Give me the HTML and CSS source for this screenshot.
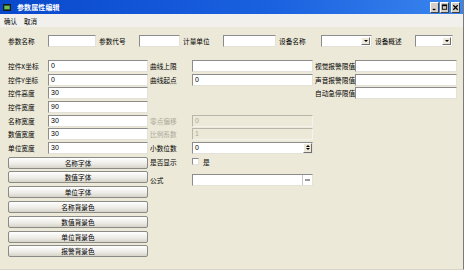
FILE: index.html
```html
<!DOCTYPE html>
<html>
<head>
    <title>参数属性编辑</title>
    <link rel="stylesheet" href="styles.css">
</head>
<body>
    <div class="window">
        <div class="titlebar">
            <svg class="app-icon" width="8" height="7" viewBox="0 0 8 7">
                <rect x="0.5" y="0.5" width="7" height="6" fill="#2d5a2d" stroke="#1a1a1a"/>
                <rect x="1.5" y="2" width="5" height="3" fill="#6fbf4f"/>
            </svg>
            <span class="title">参数属性编辑</span>
            <div class="win-buttons">
                <div class="win-btn"><svg width="8" height="9" viewBox="0 0 8 9"><rect x="2" y="6" width="3" height="1.5" fill="#000"/></svg></div>
                <div class="win-btn"><svg width="8" height="9" viewBox="0 0 8 9"><rect x="1.5" y="1.5" width="5" height="5" fill="none" stroke="#000"/><rect x="1.5" y="1.5" width="5" height="1.5" fill="#000"/></svg></div>
                <div class="win-btn close"><svg width="8" height="9" viewBox="0 0 8 9"><path d="M1.5 2 L6.5 7 M6.5 2 L1.5 7" stroke="#000" stroke-width="1.5"/></svg></div>
            </div>
        </div>
        <div class="menubar">
            <span>确认</span>
            <span>取消</span>
        </div>

        <div class="content">
            <!-- top line -->
            <div class="top-row">
                <label class="lbl w40">参数名称</label>
                <div class="field w48"></div>
                <label class="lbl w40 ml3">参数代号</label>
                <div class="field w41"></div>
                <label class="lbl w40 ml3">计量单位</label>
                <div class="field w53"></div>
                <label class="lbl w42 ml3">设备名称</label>
                <div class="field select w51"><span class="drop"><i></i></span></div>
                <label class="lbl w40 ml3">设备概述</label>
                <div class="field select w38"><span class="drop"><i></i></span></div>
            </div>

            <div class="columns">
                <!-- left column -->
                <div class="col">
                    <div class="form left">
                        <label class="lbl">控件X坐标</label><div class="field">0</div>
                        <label class="lbl">控件Y坐标</label><div class="field">0</div>
                        <label class="lbl">控件高度</label><div class="field">30</div>
                        <label class="lbl">控件宽度</label><div class="field">90</div>
                        <label class="lbl">名称宽度</label><div class="field">30</div>
                        <label class="lbl">数值宽度</label><div class="field">30</div>
                        <label class="lbl">单位宽度</label><div class="field">30</div>
                    </div>
                    <div class="buttons">
                        <button>名称字体</button>
                        <button>数值字体</button>
                        <button>单位字体</button>
                        <button>名称背景色</button>
                        <button>数值背景色</button>
                        <button>单位背景色</button>
                        <button>报警背景色</button>
                    </div>
                </div>

                <!-- middle column -->
                <div class="col">
                    <div class="form middle">
                        <label class="lbl">曲线上限</label><div class="field"></div>
                        <label class="lbl">曲线起点</label><div class="field">0</div>
                        <div class="spacer"></div>
                        <label class="lbl off">零点偏移</label><div class="field disabled">0</div>
                        <label class="lbl off">比例系数</label><div class="field disabled">1</div>
                        <label class="lbl">小数位数</label><div class="field spin">0<span class="spin-btn"><i class="up"></i><i class="down"></i></span></div>
                        <label class="lbl">是否显示</label>
                        <div class="check"><span class="box"></span><span>是</span></div>
                        <label class="lbl formula">公式</label><div class="field formula ellipsis"><span class="dots"><i></i></span></div>
                    </div>
                </div>

                <!-- right column -->
                <div class="col">
                    <div class="form right">
                        <label class="lbl">视觉报警限值</label><div class="field"></div>
                        <label class="lbl">声音报警限值</label><div class="field"></div>
                        <label class="lbl">自动急停限值</label><div class="field"></div>
                    </div>
                </div>
            </div>
        </div>
    </div>
</body>
</html>
```

FILE: styles.css
```css
body {
    margin: 0;
    background-color: #ffffff;
    font-family: "Noto Sans CJK SC", "Liberation Sans", sans-serif;
    font-size: 6.7px;
    color: #000;
}

.window {
    width: 463px;
    height: 269px;
    background-color: #ece9d8;
    border-right: 1px solid #7a7a7a;
    border-bottom: 1px solid #d8d5c6;
    display: flex;
    flex-direction: column;
    overflow: hidden;
}

.titlebar {
    height: 14px;
    background: linear-gradient(to right, #0a48cc, #1a62e0 60%, #3a86ee);
    display: flex;
    align-items: center;
    padding-left: 3px;
}

.app-icon {
    display: block;
}

.title {
    color: #fff;
    font-weight: bold;
    font-size: 7px;
    margin-left: 6px;
    letter-spacing: 0.1px;
}

.win-buttons {
    margin-left: auto;
    margin-right: 3px;
    display: flex;
    gap: 1px;
}

.win-btn {
    width: 7px;
    height: 9px;
    background-color: #d4d0c8;
    border: 1px solid;
    border-color: #fff #404040 #404040 #fff;
    display: flex;
    align-items: center;
    justify-content: center;
}

.win-btn svg {
    display: block;
}

.win-btn.close {
    margin-left: 1px;
}

.menubar {
    height: 13px;
    background-color: #f1f0ec;
    display: flex;
    align-items: center;
    gap: 7px;
    padding-left: 4px;
    font-size: 6.5px;
}

.content {
    flex: 1;
    padding: 8px 0 0 8px;
}

.top-row {
    display: flex;
    align-items: center;
    height: 12px;
}

.lbl {
    white-space: nowrap;
    line-height: 12px;
}

.lbl.off {
    color: #aca899;
}

.w38 { width: 38px; }
.w40 { width: 40px; }
.w41 { width: 41px; }
.w42 { width: 42px; }
.w48 { width: 48px; }
.w51 { width: 51px; }
.w53 { width: 53px; }
.ml3 { margin-left: 3px; }

.field {
    box-sizing: border-box;
    height: 12px;
    background-color: #fff;
    border: 1px solid;
    border-color: #8c8c8c #e4e2d8 #e4e2d8 #8c8c8c;
    padding-left: 2px;
    font-family: "Liberation Sans", sans-serif;
    font-size: 7px;
    line-height: 10px;
    position: relative;
}

.field.disabled {
    background-color: #ece9d8;
    color: #aca899;
    border-color: #b8b6aa #f4f3ee #f4f3ee #b8b6aa;
}

.select .drop,
.spin .spin-btn,
.ellipsis .dots {
    position: absolute;
    top: 0;
    right: 0;
    bottom: 0;
    width: 9px;
    background-color: #ece9d8;
    border-left: 1px solid #d0cdbf;
    display: flex;
    align-items: center;
    justify-content: center;
}

.select .drop {
    border: 1px solid;
    border-color: #fff #6e6e6e #6e6e6e #fff;
    box-sizing: border-box;
    top: 1px;
    bottom: 1px;
    right: 1px;
}

.select .drop i {
    border-left: 2px solid transparent;
    border-right: 2px solid transparent;
    border-top: 2px solid #000;
}

.spin .spin-btn {
    flex-direction: column;
    gap: 1px;
    border: 1px solid;
    border-color: #fff #6e6e6e #6e6e6e #fff;
    box-sizing: border-box;
}

.spin .spin-btn i {
    border-left: 2px solid transparent;
    border-right: 2px solid transparent;
}

.spin .spin-btn .up {
    border-bottom: 2px solid #000;
}

.spin .spin-btn .down {
    border-top: 2px solid #000;
}

.ellipsis .dots {
    background-color: #fff;
    border-left: 1px solid #c8c8c8;
}

.ellipsis .dots i {
    width: 5px;
    height: 2px;
    background-color: #9a9a9a;
}

.columns {
    display: flex;
    margin-top: 13px;
}

.col {
    display: flex;
    flex-direction: column;
}

.form {
    display: grid;
    row-gap: 1.67px;
    grid-auto-rows: 12px;
    align-items: center;
}

.form.left {
    grid-template-columns: 40px 100px;
}

.form.middle {
    grid-template-columns: 42px 121px;
    margin-left: 2px;
}

.form.right {
    grid-template-columns: 40px 102px;
    margin-left: 2px;
}

.spacer {
    grid-column: 1 / 3;
    grid-row: span 2;
}

.lbl.formula,
.field.formula {
    margin-top: 9px;
}

.check {
    display: flex;
    align-items: center;
    gap: 4px;
    height: 12px;
}

.check .box {
    box-sizing: border-box;
    width: 7px;
    height: 7px;
    background-color: #fff;
    border: 1px solid;
    border-color: #8c8c8c #e4e2d8 #e4e2d8 #8c8c8c;
}

.buttons {
    display: flex;
    flex-direction: column;
    gap: 2.8px;
    margin-top: 2.7px;
}

button {
    box-sizing: border-box;
    width: 140px;
    height: 12px;
    padding: 0;
    font-family: "Noto Sans CJK SC", "Liberation Sans", sans-serif;
    font-size: 6.7px;
    line-height: 10px;
    color: #000;
    background: linear-gradient(#ffffff, #ecebe6 60%, #d6d3c8);
    border: 1px solid #8a8a86;
    border-radius: 2px;
}
```
